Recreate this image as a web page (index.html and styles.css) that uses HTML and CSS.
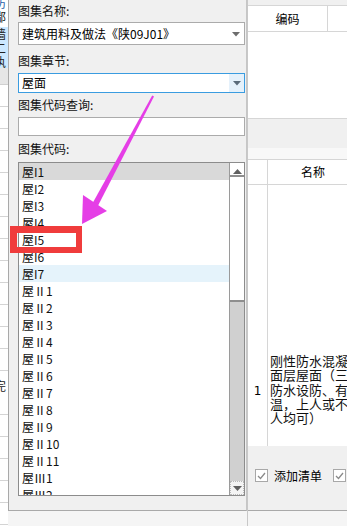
FILE: index.html
```html
<!DOCTYPE html>
<html lang="zh">
<head>
<meta charset="utf-8">
<title>图集</title>
<link rel="stylesheet" href="styles.css">
</head>
<body>
<div class="screen">
  <div class="strip">
    <div class="frag frag-blue">防</div>
    <div class="frag">鄙</div>
    <div class="strip-sel">
      <div class="frag">墙</div>
      <div class="frag">二</div>
      <div class="frag">执</div>
    </div>
    <div class="strip-gray"></div>
    <div class="strip-rows"><div class="frag frag-low">完</div></div>
  </div>

  <div class="dialog">
    <div class="label">图集名称:</div>
    <div class="select s1">
      <span class="sel-text">建筑用料及做法《陕09J01》</span>
      <span class="caret"><svg width="8" height="5" viewBox="0 0 8 5"><path d="M0 0h8L4 4.5z" fill="#6d6d6d"/></svg></span>
    </div>
    <div class="label l2">图集章节:</div>
    <div class="select s2">
      <span class="sel-text">屋面</span>
      <span class="btn"><svg width="8" height="5" viewBox="0 0 8 5"><path d="M0 0h8L4 4.5z" fill="#5a6b7a"/></svg></span>
    </div>
    <div class="label l3">图集代码查询:</div>
    <div class="input"></div>
    <div class="label l4">图集代码:</div>
    <div class="list">
      <div class="items">
        <div class="item sel">屋I1</div>
        <div class="item">屋I2</div>
        <div class="item">屋I3</div>
        <div class="item">屋I4</div>
        <div class="item">屋I5</div>
        <div class="item">屋I6</div>
        <div class="item hover">屋I7</div>
        <div class="item">屋Ⅱ1</div>
        <div class="item">屋Ⅱ2</div>
        <div class="item">屋Ⅱ3</div>
        <div class="item">屋Ⅱ4</div>
        <div class="item">屋Ⅱ5</div>
        <div class="item">屋Ⅱ6</div>
        <div class="item">屋Ⅱ7</div>
        <div class="item">屋Ⅱ8</div>
        <div class="item">屋Ⅱ9</div>
        <div class="item">屋Ⅱ10</div>
        <div class="item">屋Ⅱ11</div>
        <div class="item">屋Ⅲ1</div>
        <div class="item">屋Ⅲ2</div>
      </div>
      <div class="sbar">
        <div class="sb-up"><svg width="9" height="5" viewBox="0 0 9 5"><path d="M0 5h9L4.5 0z" fill="#606060"/></svg></div>
        <div class="sb-thumb"></div>
        <div class="sb-track"></div>
        <div class="sb-down"><svg width="9" height="5" viewBox="0 0 9 5"><path d="M0 0h9L4.5 5z" fill="#606060"/></svg></div>
      </div>
    </div>
  </div>

  <div class="right">
    <div class="r-top"></div>
    <div class="t1-head">
      <div class="t1-c1">编码</div>
      <div class="t1-c2"></div>
    </div>
    <div class="t1-body"></div>
    <div class="r-gap"></div>
    <div class="r-light"></div>
    <div class="t2-head">
      <div class="t2-c1"></div>
      <div class="t2-c2">名称</div>
    </div>
    <div class="t2-body">
      <div class="t2-c1 num">1</div>
      <div class="t2-c2"><p class="desc">刚性防水混凝土面层屋面（三道防水设防、有保温，上人或不上人均可）</p></div>
    </div>
    <div class="r-bar">
      <span class="cb"><svg width="9" height="8" viewBox="0 0 9 8"><path d="M1 4l2.5 2.5L8 1" fill="none" stroke="#8a8a8a" stroke-width="1.3"/></svg></span>
      <span class="cb-label">添加清单</span>
      <span class="cb cb2"><svg width="9" height="8" viewBox="0 0 9 8"><path d="M1 4l2.5 2.5L8 1" fill="none" stroke="#8a8a8a" stroke-width="1.3"/></svg></span>
    </div>
    <div class="r-foot"></div>
  </div>

  <div class="redbox"></div>
  <svg class="arrow" width="347" height="526" viewBox="0 0 347 526">
    <polygon points="154,96.5 97.6,206.4 92.4,203.6 152.2,95.5" fill="#e53ee6"/>
    <polygon points="82,224 83,195 107,211" fill="#e53ee6"/>
  </svg>
</div>
</body>
</html>
```

FILE: styles.css
```css
html, body {
  margin: 0;
  padding: 0;
}
body {
  width: 347px;
  height: 526px;
  overflow: hidden;
  background: #f5f5f5;
  font-family: "Noto Sans CJK SC", "Microsoft YaHei", sans-serif;
  font-size: 12px;
  color: #000;
}
.screen {
  position: relative;
  display: flex;
  width: 347px;
  height: 526px;
  overflow: hidden;
}

/* left background strip */
.strip {
  width: 8px;
  flex: none;
  background: #fff;
  overflow: hidden;
  display: flex;
  flex-direction: column;
}
.frag {
  width: 20px;
  margin-left: -6px;
  line-height: 14px;
  font-size: 12px;
  color: #222;
  white-space: nowrap;
}
.frag-blue {
  color: #2a5fa8;
  line-height: 10px;
  margin-top: -2px;
  margin-bottom: 2px;
}
.strip-sel {
  margin-top: 3px;
  height: 41px;
  background: #cce8ff;
  color: #223;
}
.strip-gray {
  height: 16px;
  background: #e6e6e6;
  border-bottom: 1px solid #d0d0d0;
}
.strip-rows {
  flex: 1;
  background: repeating-linear-gradient(to bottom, #fff 0, #fff 21px, #d4d4d4 21px, #d4d4d4 22px);
  display: flex;
  flex-direction: column;
  justify-content: flex-start;
}
.frag-low {
  margin-top: 294px;
  background: #fff;
}

/* dialog */
.dialog {
  width: 239px;
  height: 511px;
  flex: none;
  box-sizing: border-box;
  border-left: 1px solid #a9a9a9;
  border-right: 1px solid #c6c6c6;
  border-bottom: 1px solid #a9a9a9;
  background: #f0f0f0;
  padding: 4px 1px 0 9px;
  display: flex;
  flex-direction: column;
}
.label {
  line-height: 14px;
  height: 14px;
  color: #111;
}
.l2 { margin-top: 9px; }
.l3 { margin-top: 5px; }
.l4 { margin-top: 6px; }
.select {
  box-sizing: border-box;
  width: 227px;
  background: #fff;
  display: flex;
  align-items: center;
}
.s1 {
  margin-top: 4px;
  height: 23px;
  border: 1px solid #ababab;
}
.s2 {
  margin-top: 5px;
  height: 20px;
  border: 1px solid #3a9ce0;
}
.sel-text {
  flex: 1;
  padding-left: 3px;
  white-space: nowrap;
  overflow: hidden;
  line-height: 16px;
}
.caret {
  width: 16px;
  display: flex;
  justify-content: center;
  margin-top: 1px;
}
.btn {
  width: 15px;
  height: 18px;
  background: #e5f1fb;
  display: flex;
  align-items: center;
  justify-content: center;
}
.input {
  margin-top: 5px;
  width: 227px;
  height: 19px;
  box-sizing: border-box;
  border: 1px solid #ababab;
  background: #fff;
}
.list {
  margin-top: 6px;
  width: 227px;
  height: 334px;
  box-sizing: border-box;
  border: 1px solid #8c8c8c;
  background: #fff;
  display: flex;
}
.items {
  flex: 1;
  overflow: hidden;
}
.item {
  height: 17px;
  line-height: 17px;
  padding-left: 3px;
  white-space: nowrap;
  color: #111;
}
.item.sel { background: #d9d9d9; }
.item.hover { background: #e5f3fb; }
.sbar {
  width: 15px;
  flex: none;
  box-sizing: border-box;
  border-left: 1px solid #9a9a9a;
  display: flex;
  flex-direction: column;
}
.sb-up {
  height: 12px;
  display: flex;
  align-items: flex-end;
  justify-content: center;
  padding-bottom: 1px;
  box-sizing: border-box;
}
.sb-thumb {
  height: 127px;
  box-sizing: border-box;
  border-top: 2px solid #8e8e8e;
  border-bottom: 2px solid #8e8e8e;
  background: #fff;
}
.sb-track {
  flex: 1;
  background: #d0d0d0;
}
.sb-down {
  height: 14px;
  box-sizing: border-box;
  border: 1px dotted #b8b8b8;
  background: #f4f4f4;
  display: flex;
  align-items: center;
  justify-content: center;
}

/* right panel */
.right {
  width: 100px;
  flex: none;
  box-sizing: border-box;
  border-left: 1px solid #c8c8c8;
  display: flex;
  flex-direction: column;
  overflow: hidden;
  background: #f0f0f0;
}
.r-top { height: 5px; background: #f0f0f0; }
.t1-head {
  height: 27px;
  box-sizing: border-box;
  border-top: 1px solid #d6d6d6;
  border-bottom: 1px solid #d6d6d6;
  background: #fff;
  display: flex;
}
.t1-c1 {
  width: 80px;
  box-sizing: border-box;
  border-right: 1px solid #d6d6d6;
  text-align: center;
  line-height: 25px;
}
.t1-c2 { flex: 1; }
.t1-body {
  height: 86px;
  background: #fff;
  border-bottom: 1px solid #d6d6d6;
}
.r-gap { height: 29px; background: #f0f0f0; }
.r-light { height: 11px; background: #f8f8f8; }
.t2-head {
  height: 26px;
  box-sizing: border-box;
  border-top: 1px solid #d6d6d6;
  border-bottom: 1px solid #d6d6d6;
  background: #fff;
  display: flex;
}
.t2-c1 {
  width: 20px;
  flex: none;
  box-sizing: border-box;
  border-right: 1px solid #d6d6d6;
}
.t2-c2 {
  width: 90px;
  flex: none;
  text-align: center;
  line-height: 24px;
}
.t2-body {
  height: 261px;
  background: #fff;
  display: flex;
}
.num {
  text-align: center;
  padding-top: 199px;
  line-height: 14px;
  font-size: 12px;
  font-family: "DejaVu Sans", sans-serif;
}
.desc {
  margin: 0;
  margin-left: 2px;
  padding-top: 169px;
  width: 92px;
  text-align: left;
  font-size: 13px;
  line-height: 14.3px;
  color: #111;
}
.r-bar {
  height: 65px;
  box-sizing: border-box;
  border-bottom: 1px solid #a9a9a9;
  background: #f0f0f0;
  display: flex;
  align-items: flex-start;
  padding: 23px 0 0 7px;
}
.cb {
  width: 13px;
  height: 13px;
  box-sizing: border-box;
  border: 1px solid #a8a8a8;
  background: #fff;
  display: flex;
  align-items: center;
  justify-content: center;
  flex: none;
}
.cb-label {
  margin-left: 6px;
  line-height: 13px;
  white-space: nowrap;
}
.cb2 { margin-left: 11px; }
.r-foot { flex: 1; background: #f5f5f5; }

/* overlays */
.redbox {
  position: absolute;
  left: 10px;
  top: 226px;
  width: 72px;
  height: 27px;
  box-sizing: border-box;
  border-style: solid;
  border-color: #f03c3c;
  border-width: 7px 6px 6px 7px;
}
.arrow {
  position: absolute;
  left: 0;
  top: 0;
  pointer-events: none;
}
```
